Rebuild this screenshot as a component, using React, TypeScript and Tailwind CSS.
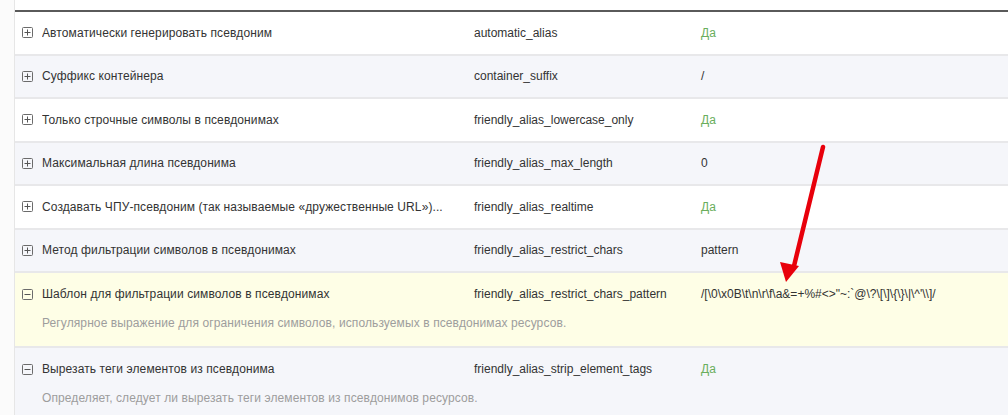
import React from "react";

type Row = { label: string; key: string; value: string; green?: boolean; desc?: string; open?: boolean; bg: "white" | "grey" | "yellow" };

const rows: Row[] = [
  { label: "Автоматически генерировать псевдоним", key: "automatic_alias", value: "Да", green: true, bg: "white" },
  { label: "Суффикс контейнера", key: "container_suffix", value: "/", bg: "grey" },
  { label: "Только строчные символы в псевдонимах", key: "friendly_alias_lowercase_only", value: "Да", green: true, bg: "white" },
  { label: "Максимальная длина псевдонима", key: "friendly_alias_max_length", value: "0", bg: "grey" },
  { label: "Создавать ЧПУ-псевдоним (так называемые «дружественные URL»)...", key: "friendly_alias_realtime", value: "Да", green: true, bg: "white" },
  { label: "Метод фильтрации символов в псевдонимах", key: "friendly_alias_restrict_chars", value: "pattern", bg: "grey" },
  {
    label: "Шаблон для фильтрации символов в псевдонимах",
    key: "friendly_alias_restrict_chars_pattern",
    value: "/[\\0\\x0B\\t\\n\\r\\f\\a&=+%#<>\"~:`@\\?\\[\\]\\{\\}\\|\\^'\\\\]/",
    desc: "Регулярное выражение для ограничения символов, используемых в псевдонимах ресурсов.",
    open: true,
    bg: "yellow",
  },
  {
    label: "Вырезать теги элементов из псевдонима",
    key: "friendly_alias_strip_element_tags",
    value: "Да",
    green: true,
    desc: "Определяет, следует ли вырезать теги элементов из псевдонимов ресурсов.",
    open: true,
    bg: "grey",
  },
];

function Toggle({ open }: { open?: boolean }) {
  return (
    <svg width="11" height="11" viewBox="0 0 11 11" className="shrink-0">
      <rect x="0.5" y="0.5" width="10" height="10" rx="1" fill="none" stroke="#6b6b6b" strokeWidth="1" />
      <line x1="2.5" y1="5.5" x2="8.5" y2="5.5" stroke="#555" strokeWidth="1" />
      {!open && <line x1="5.5" y1="2.5" x2="5.5" y2="8.5" stroke="#555" strokeWidth="1" />}
    </svg>
  );
}

export default function App() {
  return (
    <div
      className="relative w-[1008px] h-[415px] overflow-hidden bg-white flex text-[12px] text-[#333]"
      style={{ fontFamily: '"Liberation Sans", Arial, sans-serif' }}
    >
      <div className="w-[15px] shrink-0 bg-[#fbfbfb] border-r border-[#e6e6e6]" />
      <div className="flex-1 pt-[10px]">
        <div className="border-t-2 border-[#5a5a5a]">
          {rows.map((r, i) => {
            const bg = r.bg === "yellow" ? "bg-[#fefee6]" : r.bg === "grey" ? "bg-[#f5f6fa]" : "bg-white";
            return (
              <div key={i} className={`${bg} border-b-2 border-[#e8e8ea]`}>
                <div className={`flex items-center ${r.desc ? "h-[42px]" : "h-[41.5px]"}`}>
                  <div className="w-[459px] shrink-0 flex items-center pl-[7px] gap-[9px]">
                    <Toggle open={r.open} />
                    <span className="truncate tracking-[0.1px]">{r.label}</span>
                  </div>
                  <div className="w-[227px] shrink-0">{r.key}</div>
                  <div className={r.green ? "text-[#6aae5c]" : ""}>{r.value}</div>
                </div>
                {r.desc && (
                  <div className="pl-[27px] pb-[16px] mt-[1px] text-[#9d9d9d] leading-[14px] tracking-[0.1px]">{r.desc}</div>
                )}
              </div>
            );
          })}
        </div>
      </div>
      <svg className="absolute left-0 top-0 pointer-events-none" width="1008" height="415">
        <line x1="823" y1="147" x2="794" y2="266" stroke="#e8000b" strokeWidth="4.5" strokeLinecap="round" />
        <polygon points="786,282 780,262 799,266" fill="#e8000b" />
      </svg>
    </div>
  );
}
